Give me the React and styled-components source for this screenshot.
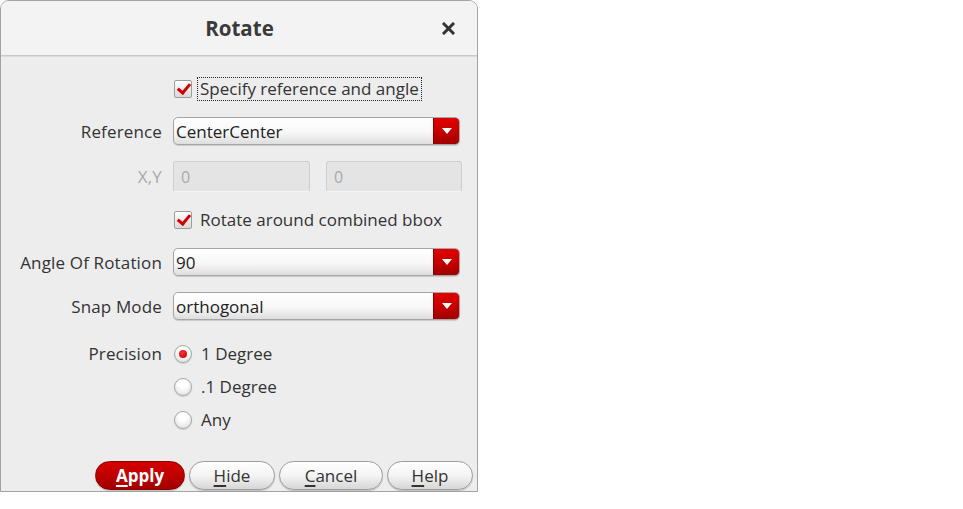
import React, { useState } from "react";
import styled, { createGlobalStyle } from "styled-components";

const GlobalStyle = createGlobalStyle`
  html, body {
    margin: 0;
    padding: 0;
    background: #ffffff;
  }
  body {
    font-family: "Open Sans", "Noto Sans", "DejaVu Sans", sans-serif;
    color: #333333;
  }
`;

const RotateDialog = () => {
  const [specify, setSpecify] = useState(true);
  const [combined, setCombined] = useState(true);
  const [precision, setPrecision] = useState("1");

  return (
    <Dialog>
      <TitleBar>
        <Title>Rotate</Title>
        <CloseButton aria-label="Close">
          <svg width="13" height="13" viewBox="0 0 13 13">
            <path d="M2 2 L11 11 M11 2 L2 11" stroke="#333" strokeWidth="3" strokeLinecap="square" />
          </svg>
        </CloseButton>
      </TitleBar>

      <Body>
        <Row>
          <span />
          <CheckLine>
            <CheckBox checked={specify} onClick={() => setSpecify(!specify)}>
              {specify && <CheckMark />}
            </CheckBox>
            <FocusLabel>Specify reference and angle</FocusLabel>
          </CheckLine>
        </Row>

        <Row>
          <Label>Reference</Label>
          <Select>
            <SelectText>CenterCenter</SelectText>
            <SelectArrow><Triangle /></SelectArrow>
          </Select>
        </Row>

        <Row>
          <Label disabled>X,Y</Label>
          <Pair>
            <TextInput>0</TextInput>
            <TextInput>0</TextInput>
          </Pair>
        </Row>

        <Row>
          <span />
          <CheckLine>
            <CheckBox checked={combined} onClick={() => setCombined(!combined)}>
              {combined && <CheckMark />}
            </CheckBox>
            <PlainLabel>Rotate around combined bbox</PlainLabel>
          </CheckLine>
        </Row>

        <Row>
          <Label>Angle Of Rotation</Label>
          <Select>
            <SelectText>90</SelectText>
            <SelectArrow><Triangle /></SelectArrow>
          </Select>
        </Row>

        <Row>
          <Label>Snap Mode</Label>
          <Select>
            <SelectText>orthogonal</SelectText>
            <SelectArrow><Triangle /></SelectArrow>
          </Select>
        </Row>

        <PrecisionRow>
          <RadioLabel>Precision</RadioLabel>
          <RadioGroup>
            {[
              ["1", "1 Degree"],
              [".1", ".1 Degree"],
              ["any", "Any"],
            ].map(([value, text]) => (
              <RadioLine key={value} onClick={() => setPrecision(value)}>
                <Radio>{precision === value && <RadioDot />}</Radio>
                <PlainLabel>{text}</PlainLabel>
              </RadioLine>
            ))}
          </RadioGroup>
        </PrecisionRow>
      </Body>

      <ButtonBar>
        <PillButton primary width={90}><Key>A</Key>pply</PillButton>
        <PillButton width={86}><Key>H</Key>ide</PillButton>
        <PillButton width={104}><Key>C</Key>ancel</PillButton>
        <PillButton width={86}><Key>H</Key>elp</PillButton>
      </ButtonBar>
    </Dialog>
  );
};

export default function App() {
  return (
    <>
      <GlobalStyle />
      <RotateDialog />
    </>
  );
}

const Dialog = styled.div`
  width: 478px;
  height: 492px;
  box-sizing: border-box;
  display: flex;
  flex-direction: column;
  border: 1px solid #a3a3a3;
  border-radius: 9px 9px 0 0;
  background: #ededed;
  overflow: hidden;
`;

const TitleBar = styled.div`
  height: 54px;
  flex: none;
  display: flex;
  align-items: center;
  justify-content: center;
  position: relative;
  background: #f3f3f3;
  border-bottom: 1px solid #c9c9c9;
  box-shadow: 0 1px 0 #dcdcdc;
`;

const Title = styled.div`
  font-size: 20.5px;
  font-weight: 700;
  color: #3a3a3a;
  margin-left: 1px;
`;

const CloseButton = styled.div`
  position: absolute;
  right: 22px;
  top: 21px;
  width: 13px;
  height: 13px;
  display: flex;
`;

const Body = styled.div`
  flex: 1;
  display: flex;
  flex-direction: column;
  gap: 16px;
  padding: 21px 17px 0 0;
`;

const Row = styled.div`
  display: grid;
  grid-template-columns: 161px 1fr;
  column-gap: 11px;
  align-items: center;
  min-height: 24px;
`;

const Label = styled.div`
  text-align: right;
  font-size: 17px;
  letter-spacing: 0.15px;
  color: ${({ disabled }) => (disabled ? "#a9a9a9" : "#333333")};
  white-space: nowrap;
`;

const CheckLine = styled.div`
  display: flex;
  align-items: center;
  gap: 5px;
  height: 24px;
  margin-left: 1px;
`;

const CheckBox = styled.div`
  width: 16px;
  height: 16px;
  flex: none;
  border: 1px solid #9d9d9d;
  border-radius: 2px;
  background: linear-gradient(#ffffff, #d9d9d9);
  position: relative;
  cursor: pointer;
`;

const CheckMark = styled.div`
  position: absolute;
  left: 5px;
  top: 0px;
  width: 5px;
  height: 10px;
  border-right: 3px solid #d10000;
  border-bottom: 3px solid #d10000;
  transform: rotate(40deg);
`;

const FocusLabel = styled.div`
  font-size: 17px;
  padding: 0 2px;
  border: 1px dotted #222;
  line-height: 22px;
  white-space: nowrap;
`;

const PlainLabel = styled.div`
  font-size: 17px;
  line-height: 22px;
  padding: 0 3px;
  white-space: nowrap;
`;

const Select = styled.div`
  height: 28px;
  box-sizing: border-box;
  display: flex;
  align-items: stretch;
  border: 1px solid #a5a5a5;
  border-radius: 5px;
  background: linear-gradient(#ffffff 0%, #f7f7f7 55%, #dedede 100%);
  box-shadow: 0 1px 1px rgba(0, 0, 0, 0.15);
  overflow: hidden;
`;

const SelectText = styled.div`
  flex: 1;
  display: flex;
  align-items: center;
  padding-left: 2px;
  font-size: 17px;
  color: #222;
`;

const SelectArrow = styled.div`
  width: 25px;
  display: flex;
  align-items: center;
  justify-content: center;
  background: linear-gradient(#e00000 0%, #c80000 50%, #9e0000 100%);
  border-left: 1px solid #8a0000;
`;

const Triangle = styled.div`
  width: 0;
  height: 0;
  border-left: 5px solid transparent;
  border-right: 5px solid transparent;
  border-top: 6px solid #ffffff;
`;

const Pair = styled.div`
  display: grid;
  grid-template-columns: 137px 136px;
  column-gap: 16px;
`;

const TextInput = styled.div`
  height: 31px;
  box-sizing: border-box;
  display: flex;
  align-items: center;
  padding-left: 7px;
  font-size: 16px;
  color: #a9a9a9;
  background: #e4e4e4;
  border: 1px solid #cfcfcf;
  border-bottom-color: #f6f6f6;
  border-radius: 3px;
`;

const PrecisionRow = styled.div`
  display: grid;
  grid-template-columns: 161px 1fr;
  column-gap: 11px;
  align-items: start;
  margin-top: 6px;
`;

const RadioLabel = styled(Label)`
  line-height: 24px;
`;

const RadioGroup = styled.div`
  display: flex;
  flex-direction: column;
  gap: 9px;
`;

const RadioLine = styled.div`
  display: flex;
  align-items: center;
  gap: 6px;
  height: 24px;
  margin-left: 1px;
  cursor: pointer;
`;

const Radio = styled.div`
  width: 16px;
  height: 16px;
  flex: none;
  border-radius: 50%;
  border: 1px solid #a8a8a8;
  background: radial-gradient(circle at 50% 30%, #ffffff 30%, #d8d8d8 100%);
  display: flex;
  align-items: center;
  justify-content: center;
  box-shadow: 0 1px 1px rgba(0, 0, 0, 0.15);
`;

const RadioDot = styled.div`
  width: 8px;
  height: 8px;
  border-radius: 50%;
  background: radial-gradient(circle at 40% 35%, #ff3030, #c00000);
`;

const ButtonBar = styled.div`
  flex: none;
  display: flex;
  justify-content: flex-end;
  gap: 4px;
  padding: 0 4px 1px 0;
`;

const PillButton = styled.div`
  width: ${({ width }) => width}px;
  height: 29px;
  box-sizing: border-box;
  display: flex;
  align-items: center;
  justify-content: center;
  border-radius: 15px;
  font-size: 17px;
  font-weight: ${({ primary }) => (primary ? 700 : 400)};
  color: ${({ primary }) => (primary ? "#ffffff" : "#333333")};
  border: 1px solid ${({ primary }) => (primary ? "#8c0000" : "#9c9c9c")};
  background: ${({ primary }) =>
    primary
      ? "linear-gradient(#d40000 0%, #c00000 50%, #a00000 100%)"
      : "linear-gradient(#ffffff 0%, #f4f4f4 50%, #d6d6d6 100%)"};
  box-shadow: 0 1px 1px rgba(0, 0, 0, 0.2);
  cursor: pointer;
`;

const Key = styled.span`
  text-decoration: underline;
  text-decoration-thickness: 2px;
  text-underline-offset: 3px;
`;
